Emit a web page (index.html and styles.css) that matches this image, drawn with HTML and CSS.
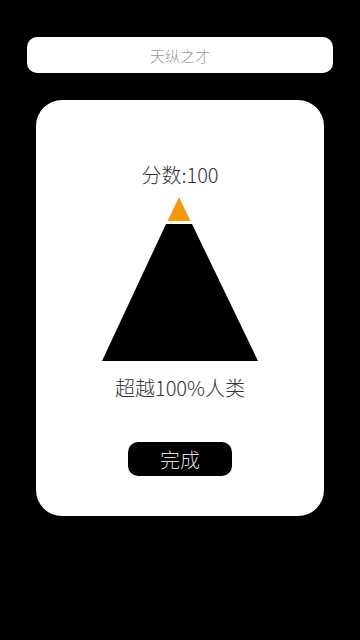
FILE: index.html
```html
<!DOCTYPE html>
<html lang="zh">
<head>
<meta charset="utf-8">
<title>结果</title>
<link rel="stylesheet" href="styles.css">
</head>
<body>
<div class="title-bar">天纵之才</div>
<div class="card">
  <div class="score">分数:100</div>
  <svg class="pyramid" width="156" height="164" viewBox="0 0 156 164">
    <polygon points="77,0 88.5,24 65.5,24" fill="#f39a0b"/>
    <polygon points="64,27 90,27 156,164 0,164" fill="#000"/>
  </svg>
  <div class="beat">超越100%人类</div>
  <button class="done">完成</button>
</div>
</body>
</html>
```
FILE: styles.css
```css
html, body {
  margin: 0;
  padding: 0;
  background: #000;
  width: 360px;
  height: 640px;
  font-family: "Noto Sans CJK SC", "Noto Sans", sans-serif;
}
.title-bar {
  margin: 37px 27px 0;
  height: 36px;
  background: #fff;
  border-radius: 10px;
  color: #9a9a9a;
  font-size: 15px;
  font-weight: 300;
  display: flex;
  align-items: center;
  justify-content: center;
}
.card {
  margin: 27px 36px 0;
  height: 416px;
  box-sizing: border-box;
  background: #fff;
  border-radius: 26px;
  padding-top: 61px;
  display: flex;
  flex-direction: column;
  align-items: center;
}
.score {
  font-size: 20px;
  line-height: 28px;
  color: #333;
  font-weight: 300;
}
.pyramid {
  display: block;
  margin-top: 8px;
}
.beat {
  margin-top: 13px;
  font-size: 20px;
  line-height: 28px;
  color: #333;
  font-weight: 300;
}
.done {
  margin-top: 40px;
  width: 104px;
  height: 34px;
  border: none;
  border-radius: 10px;
  background: #000;
  color: #ddd;
  font-family: "Noto Sans CJK SC", "Noto Sans", sans-serif;
  font-size: 20px;
  font-weight: 300;
  padding: 0;
}
```
